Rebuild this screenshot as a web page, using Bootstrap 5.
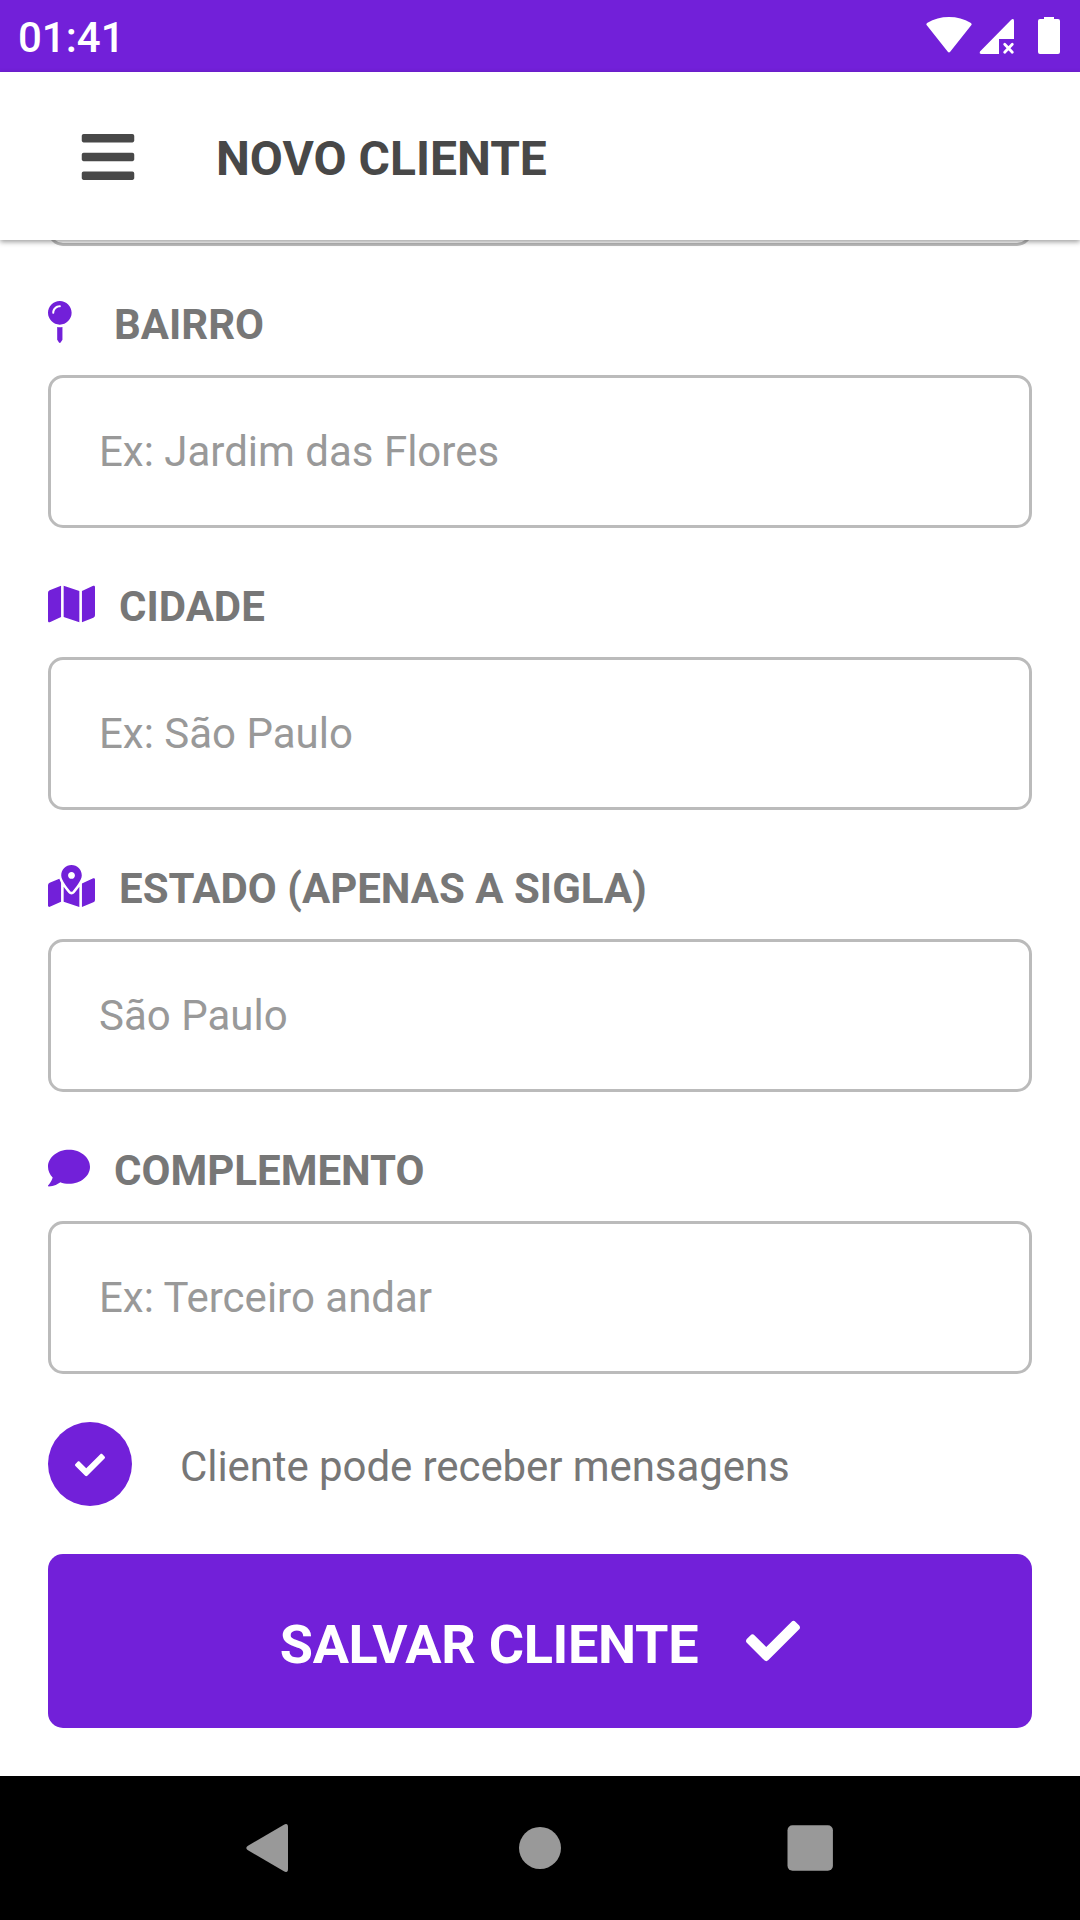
<!DOCTYPE html>
<html lang="pt-BR">
<head>
<meta charset="utf-8">
<meta name="viewport" content="width=device-width, initial-scale=1">
<title>Novo cliente</title>
<link href="https://cdn.jsdelivr.net/npm/bootstrap@5.3.0/dist/css/bootstrap.min.css" rel="stylesheet">
<style>
  :root { --brand: #7220d9; }
  body { font-family: Roboto, "Noto Sans", sans-serif; font-size: 42px; line-height: 49px; color: #777; }
  svg { display: block; flex: none; fill: currentColor; }
  .screen { height: 1920px; }
  .bg-brand { background-color: var(--brand); }
  .text-brand { color: var(--brand); }
  .status-bar { height: 72px; padding: 2px 20px 0 18px; }
  .clock { font-weight: 500; letter-spacing: 0; }
  .app-bar { height: 168px; padding: 1px 78px 0; gap: 78px; color: #484848; box-shadow: 0 2px 5px rgba(0,0,0,.38); z-index: 2; }
  .app-title { font-size: 48px; line-height: 56px; padding-top: 5px; }
  .menu-btn { color: inherit; }
  .form-area { padding: 0 48px; height: 1536px; }
  .previous-field { height: 6px; overflow: hidden; }
  .field-box { height: 153px; border: 3px solid #bbb; border-radius: 15px; padding: 0 48px; font-size: 42px; background: #fff; }
  .field-box::placeholder { color: #999; opacity: 1; }
  .previous-field .field-box { margin-top: -147px; }
  .field-label { height: 129px; padding: 55px 0 32px; gap: 24px; }
  .field-label label { padding-top: 4px; }
  .check-row { margin-top: 48px; height: 84px; gap: 48px; }
  .check-dot { width: 84px; height: 84px; padding-top: 1px; }
  .check-text { padding-top: 5px; letter-spacing: -.08px; }
  .save-btn { margin-top: 48px; height: 174px; border-radius: 15px; font-size: 54px; line-height: 64px; gap: 48px; }
  .save-btn:hover { background-color: var(--brand); }
  .save-btn span { padding-top: 8px; letter-spacing: -.32px; }
  .nav-keys { height: 144px; color: #999; }
</style>
</head>
<body>
<div class="screen d-flex flex-column overflow-hidden bg-white">
  <div class="status-bar bg-brand text-white d-flex align-items-center justify-content-between">
    <span class="clock">01:41</span>
    <svg width="134" height="40" viewBox="0 0 134 40" fill="#fff">
      <path d="M1 8.600Q-.5 7 1.500 5.800Q11 0 23 0T44.500 5.800Q46.500 7 45 8.600L24.200 34.800Q23 36.300 21.800 34.800Z"/>
      <path d="M54 34.500L84.500 3.500Q88 .500 88 4V22H73V37H55.500Q53 37 54 34.500Z"/>
      <path d="M78.700 27.300L86.300 35.300M86.300 27.300L78.700 35.300" stroke="#fff" stroke-width="2.800" stroke-linecap="round"/>
      <path d="M118 0h10v3h4q2 0 2 2v31q0 2-2 2h-18q-2 0-2-2V5q0-2 2-2h4Z" transform="translate(0 -1)"/>
      <path d="M118 0h10v-1h-10Z"/>
    </svg>
  </div>

  <header class="app-bar bg-white d-flex align-items-center position-relative">
    <button class="menu-btn btn border-0 p-0" aria-label="Menu">
      <svg width="60" height="60" viewBox="-32 0 512 512"><path d="M16 132h416c8.837 0 16-7.163 16-16V76c0-8.837-7.163-16-16-16H16C7.163 60 0 67.163 0 76v40c0 8.837 7.163 16 16 16zm0 160h416c8.837 0 16-7.163 16-16v-40c0-8.837-7.163-16-16-16H16c-8.837 0-16 7.163-16 16v40c0 8.837 7.163 16 16 16zm0 160h416c8.837 0 16-7.163 16-16v-40c0-8.837-7.163-16-16-16H16c-8.837 0-16 7.163-16 16v40c0 8.837 7.163 16 16 16z"/></svg>
    </button>
    <h1 class="app-title fw-bold mb-0">NOVO CLIENTE</h1>
  </header>

  <main class="form-area">
    <div class="previous-field"><div class="field-box"></div></div>

    <div class="field-label d-flex align-items-center">
      <svg class="text-brand" width="42" height="42" viewBox="0 0 512 512"><path d="M112 316.940v156.690l22.020 33.020c4.750 7.120 15.220 7.120 19.970 0L176 473.630V316.940c-10.390 1.920-21.060 3.060-32 3.060s-21.610-1.140-32-3.060zM144 0C64.470 0 0 64.470 0 144s64.470 144 144 144 144-64.470 144-144S223.530 0 144 0zm0 76c-37.500 0-68 30.500-68 68 0 6.620-5.380 12-12 12s-12-5.380-12-12c0-50.730 41.280-92 92-92 6.620 0 12 5.380 12 12s-5.380 12-12 12z"/></svg>
      <label class="fw-bold" for="bairro">BAIRRO</label>
    </div>
    <input id="bairro" class="field-box form-control" placeholder="Ex: Jardim das Flores">

    <div class="field-label d-flex align-items-center">
      <svg class="text-brand" width="47" height="42" viewBox="0 0 576 512"><path d="M0 117.660v346.320c0 11.320 11.430 19.060 21.940 14.860L160 416V32L20.120 87.950A32.006 32.006 0 0 0 0 117.660zM192 416l192 64V96L192 32v384zM554.060 33.160L416 96v384l139.880-55.950A31.996 31.996 0 0 0 576 394.340V48.020c0-11.320-11.430-19.060-21.940-14.860z"/></svg>
      <label class="fw-bold" for="cidade">CIDADE</label>
    </div>
    <input id="cidade" class="field-box form-control" placeholder="Ex: São Paulo">

    <div class="field-label d-flex align-items-center">
      <svg class="text-brand" width="47" height="42" viewBox="0 0 576 512"><path d="M288 0c-69.590 0-126 56.410-126 126 0 56.260 82.350 158.800 113.900 196.020 6.390 7.540 17.820 7.540 24.200 0C331.650 284.800 414 182.260 414 126 414 56.410 357.590 0 288 0zm0 168c-23.200 0-42-18.800-42-42s18.800-42 42-42 42 18.800 42 42-18.800 42-42 42zM20.120 215.950A32.006 32.006 0 0 0 0 245.660v250.320c0 11.320 11.430 19.060 21.940 14.860L160 448V214.920c-8.840-15.980-16.070-31.540-21.250-46.420L20.120 215.950zM288 359.670c-14.070 0-27.380-6.180-36.510-16.960-19.660-23.200-40.570-49.620-59.490-76.720v182l192 64V266c-18.920 27.090-39.820 53.520-59.490 76.720-9.130 10.770-22.440 16.950-36.510 16.950zm266.060-198.510L416 224v288l139.880-55.950A31.996 31.996 0 0 0 576 426.340V176.020c0-11.320-11.430-19.060-21.940-14.860z"/></svg>
      <label class="fw-bold" for="estado">ESTADO (APENAS A SIGLA)</label>
    </div>
    <input id="estado" class="field-box form-control" placeholder="São Paulo">

    <div class="field-label d-flex align-items-center">
      <svg class="text-brand" width="42" height="42" viewBox="0 0 512 512"><path d="M256 32C114.600 32 0 125.100 0 240c0 49.600 21.400 95 57 130.700C44.500 421.100 2.700 466 2.200 466.500c-2.200 2.300-2.800 5.700-1.500 8.700S4.800 480 8 480c66.300 0 116-31.800 140.600-51.400 32.700 12.300 69 19.400 107.400 19.400 141.400 0 256-93.100 256-208S397.400 32 256 32z"/></svg>
      <label class="fw-bold" for="complemento">COMPLEMENTO</label>
    </div>
    <input id="complemento" class="field-box form-control" placeholder="Ex: Terceiro andar">

    <div class="check-row d-flex align-items-center">
      <div class="check-dot bg-brand text-white rounded-circle d-flex align-items-center justify-content-center" role="checkbox" aria-checked="true">
        <svg width="30" height="30" viewBox="0 0 512 512"><path d="M173.898 439.404l-166.400-166.400c-9.997-9.997-9.997-26.206 0-36.204l36.203-36.204c9.997-9.998 26.207-9.998 36.204 0L192 312.690 432.095 72.596c9.997-9.997 26.207-9.997 36.204 0l36.203 36.204c9.997 9.997 9.997 26.206 0 36.204l-294.400 294.401c-9.998 9.997-26.207 9.997-36.204-.001z"/></svg>
      </div>
      <span class="check-text">Cliente pode receber mensagens</span>
    </div>

    <button class="save-btn btn bg-brand text-white border-0 p-0 w-100 fw-bold d-flex align-items-center justify-content-center">
      <span>SALVAR CLIENTE</span>
      <svg width="54" height="54" viewBox="0 0 512 512"><path d="M173.898 439.404l-166.400-166.400c-9.997-9.997-9.997-26.206 0-36.204l36.203-36.204c9.997-9.998 26.207-9.998 36.204 0L192 312.690 432.095 72.596c9.997-9.997 26.207-9.997 36.204 0l36.203 36.204c9.997 9.997 9.997 26.206 0 36.204l-294.400 294.401c-9.998 9.997-26.207 9.997-36.204-.001z"/></svg>
    </button>
  </main>

  <nav class="nav-keys bg-black d-flex align-items-center justify-content-center">
    <svg width="588" height="48" viewBox="0 0 588 48">
      <path d="M1.600 22L37.500 .900Q42-1.500 42 3V45Q42 49.500 37.500 47.100L1.600 26Q-1 24 1.600 22Z"/>
      <circle cx="294" cy="24" r="21"/>
      <rect x="541.500" y="1.300" width="45.400" height="45.400" rx="5"/>
    </svg>
  </nav>
</div>
<script src="https://cdn.jsdelivr.net/npm/bootstrap@5.3.0/dist/js/bootstrap.bundle.min.js"></script>
</body>
</html>
